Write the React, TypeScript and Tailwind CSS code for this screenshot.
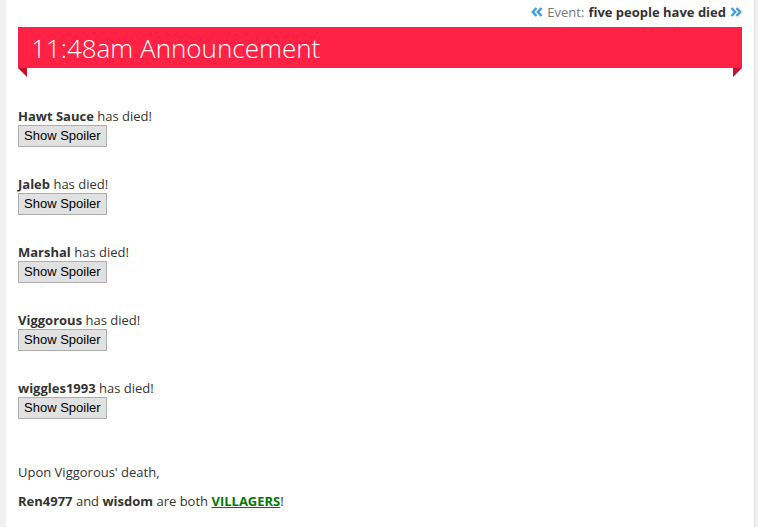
import React from "react";

const entries = ["Hawt Sauce", "Jaleb", "Marshal", "Viggorous", "wiggles1993"];

function Chevrons({ dir }: { dir: "left" | "right" }) {
  return (
    <svg width="12" height="10" viewBox="0 0 12 10" className="inline-block">
      {dir === "left" ? (
        <g fill="none" stroke="#3d9be0" strokeWidth="2.4" strokeLinecap="butt" strokeLinejoin="miter">
          <path d="M5.5 1 L1.8 5 L5.5 9" />
          <path d="M10.5 1 L6.8 5 L10.5 9" />
        </g>
      ) : (
        <g fill="none" stroke="#3d9be0" strokeWidth="2.4" strokeLinecap="butt" strokeLinejoin="miter">
          <path d="M1.5 1 L5.2 5 L1.5 9" />
          <path d="M6.5 1 L10.2 5 L6.5 9" />
        </g>
      )}
    </svg>
  );
}

export default function App() {
  return (
    <div className="flex h-[527px] w-full bg-[#f1f1f1]" style={{ fontFamily: "'Open Sans', sans-serif" }}>
      <div className="w-[6px] bg-[#f1f1f1]" />
      <div className="flex-1 bg-white px-[12px] text-[13px] leading-[18px] text-[#333]">
        <div className="flex h-[27px] items-center justify-end gap-[4px] pb-[4px]">
          <Chevrons dir="left" />
          <span className="text-[#777]">Event:</span>
          <span className="font-bold text-[#333]">five people have died</span>
          <Chevrons dir="right" />
        </div>
        <div className="relative">
          <div className="flex h-[41px] items-center bg-[#ff2244] pl-[13px] text-[26px] font-light text-white">
            11:48am Announcement
          </div>
          <div className="absolute left-0 top-[41px] h-0 w-0 border-l-[9px] border-t-[9px] border-l-transparent border-t-[#c8102e]" />
          <div className="absolute right-0 top-[41px] h-0 w-0 border-r-[9px] border-t-[9px] border-r-transparent border-t-[#c8102e]" />
        </div>
        <div className="mt-[39px] flex flex-col gap-[28px]">
          {entries.map((n) => (
            <div key={n} className="flex flex-col items-start">
              <div>
                <b>{n}</b> has died!
              </div>
              <button
                className="h-[22px] border border-[#adadad] bg-[#e1e1e1] px-[5px] text-[13px] text-black"
                style={{ fontFamily: "'Liberation Sans', Arial, sans-serif" }}
              >
                Show Spoiler
              </button>
            </div>
          ))}
        </div>
        <div className="mt-[44px]">Upon Viggorous' death,</div>
        <div className="mt-[11px]">
          <b>Ren4977</b> and <b>wisdom</b> are both{" "}
          <b className="text-[#007a00] underline">VILLAGERS</b>!
        </div>
      </div>
      <div className="w-[1px] bg-[#dcdcdc]" />
      <div className="w-[3px] bg-[#f1f1f1]" />
    </div>
  );
}
